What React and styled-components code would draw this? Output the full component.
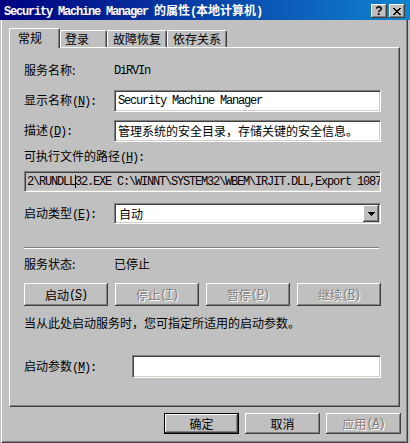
import React from "react";
import styled, { createGlobalStyle } from "styled-components";

const GlobalStyle = createGlobalStyle`
  html, body {
    margin: 0;
    padding: 0;
    background: #c0c0c0;
  }
  body {
    font-family: "Noto Sans CJK SC", "Noto Sans", sans-serif;
    font-size: 12px;
    color: #000;
  }
  * {
    box-sizing: border-box;
  }
`;

const App = () => {
  return (
    <>
      <GlobalStyle />
      <Window>
        <TitleBar>
          <TitleText>
            <Mono>Security Machine Manager </Mono>的属性<Mono>(</Mono>本地计算机<Mono>)</Mono>
          </TitleText>
          <TitleButtons>
            <TitleButton>
              <QMark>?</QMark>
            </TitleButton>
            <TitleButton>
              <svg width="8" height="7" viewBox="0 0 8 7" shapeRendering="crispEdges">
                <path d="M0 0h2v1h-2zM6 0h2v1h-2zM1 1h2v1h-2zM5 1h2v1h-2zM2 2h4v1h-4zM3 3h2v1h-2zM2 4h4v1h-4zM1 5h2v1h-2zM5 5h2v1h-2zM0 6h2v1h-2zM6 6h2v1h-2z" fill="#000" />
              </svg>
            </TitleButton>
          </TitleButtons>
        </TitleBar>

        <Body>
          <TabRow>
            <Tab $active $w={51} $pl={8}>常规</Tab>
            <Tab $w={47} $pl={4}>登录</Tab>
            <Tab $w={60} $pl={5}>故障恢复</Tab>
            <Tab $w={60} $pl={5}>依存关系</Tab>
          </TabRow>

          <Panel>
            <Row $h={14}>
              <Label>服务名称:</Label>
              <Value><Mono>DiRVIn</Mono></Value>
            </Row>

            <Row $h={22} $mt={13}>
              <Label>
                显示名称<Mono>(<Key>N</Key>):</Mono>
              </Label>
              <Field $pl={2}>
                <Mono>Security Machine Manager</Mono>
              </Field>
            </Row>

            <Row $h={22} $mt={8}>
              <Label>
                描述<Mono>(<Key>D</Key>):</Mono>
              </Label>
              <Field $pl={2}>管理系统的安全目录，存储关键的安全信息。</Field>
            </Row>

            <Row $h={14} $mt={8}>
              <Label $w={200}>
                可执行文件的路径<Mono>(<Key>H</Key>):</Mono>
              </Label>
            </Row>

            <Row $h={21} $mt={7}>
              <Field $readOnly $pl={1}>
                <Mono>
                  2\RUNDLL<Caret />32.EXE C:\WINNT\SYSTEM32\WBEM\IRJIT.DLL,Export 1087
                </Mono>
              </Field>
            </Row>

            <Row $h={21} $mt={11}>
              <Label>
                启动类型<Mono>(<Key>E</Key>):</Mono>
              </Label>
              <Field $pl={1}>
                <SelectText>自动</SelectText>
                <DropButton>
                  <svg width="7" height="4" viewBox="0 0 7 4" shapeRendering="crispEdges">
                    <path d="M0 0h7v1h-7zM1 1h5v1h-5zM2 2h3v1h-3zM3 3h1v1h-1z" fill="#000" />
                  </svg>
                </DropButton>
              </Field>
            </Row>

            <Separator $mt={23} />

            <Row $h={14} $mt={8}>
              <Label>服务状态:</Label>
              <Value>已停止</Value>
            </Row>

            <ButtonRow $mt={12}>
              <PushButton $w={84} $h={23}>
                启动<Mono>(<Key>S</Key>)</Mono>
              </PushButton>
              <PushButton $w={84} $h={23} disabled>
                停止<Mono>(<Key>T</Key>)</Mono>
              </PushButton>
              <PushButton $w={84} $h={23} disabled>
                暂停<Mono>(<Key>P</Key>)</Mono>
              </PushButton>
              <PushButton $w={84} $h={23} disabled>
                继续<Mono>(<Key>R</Key>)</Mono>
              </PushButton>
            </ButtonRow>

            <Row $h={14} $mt={10}>
              <Value>当从此处启动服务时，您可指定所适用的启动参数。</Value>
            </Row>

            <Row $h={23} $mt={25}>
              <Label $w={108}>
                启动参数<Mono>(<Key>M</Key>):</Mono>
              </Label>
              <Field />
            </Row>
          </Panel>

          <DialogButtons>
            <PushButton $w={75} $h={21} $default>确定</PushButton>
            <PushButton $w={75} $h={21}>取消</PushButton>
            <PushButton $w={75} $h={21} disabled>
              应用<Mono>(<Key>A</Key>)</Mono>
            </PushButton>
          </DialogButtons>
        </Body>
      </Window>
    </>
  );
};

export default App;

// Styled Components
const Window = styled.div`
  width: 410px;
  height: 443px;
  background: #c0c0c0;
  display: flex;
  flex-direction: column;
  overflow: hidden;
`;

const TitleBar = styled.div`
  height: 20px;
  flex: none;
  display: flex;
  align-items: center;
  justify-content: space-between;
  padding: 2px 5px 0 4px;
  background: linear-gradient(to right, #000080, #1084d0);
`;

const TitleText = styled.div`
  color: #fff;
  font-weight: bold;
  font-size: 12px;
  line-height: 14px;
  white-space: nowrap;
`;

const TitleButtons = styled.div`
  display: flex;
  gap: 2px;
`;

const TitleButton = styled.div`
  width: 16px;
  height: 14px;
  background: #c0c0c0;
  display: flex;
  align-items: center;
  justify-content: center;
  box-shadow: inset -1px -1px 0 #404040, inset 1px 1px 0 #fff,
    inset -2px -2px 0 #808080;
`;

const QMark = styled.span`
  font-family: "Liberation Sans", "DejaVu Sans", sans-serif;
  font-weight: bold;
  font-size: 12px;
  line-height: 12px;
  margin-top: -1px;
`;

const Body = styled.div`
  flex: 1;
  margin: 0 2px 0 1px;
  border-left: 1px solid #fff;
  border-right: 1px solid #404040;
  border-bottom: 1px solid #404040;
  box-shadow: inset -1px -1px 0 #808080;
  padding: 8px 0 0 7px;
  display: flex;
  flex-direction: column;
`;

const TabRow = styled.div`
  height: 19px;
  display: flex;
  align-items: flex-end;
  flex: none;
`;

const Tab = styled.div`
  position: relative;
  z-index: ${(p) => (p.$active ? 1 : 0)};
  width: ${(p) => p.$w}px;
  height: ${(p) => (p.$active ? 20 : 17)}px;
  margin-bottom: ${(p) => (p.$active ? -1 : 0)}px;
  padding-left: ${(p) => p.$pl}px;
  padding-bottom: ${(p) => (p.$active ? 2 : 0)}px;
  background: #c0c0c0;
  border-top: 1px solid #fff;
  border-left: 1px solid #fff;
  border-right: 1px solid #404040;
  border-radius: 2px 2px 0 0;
  box-shadow: inset -1px 0 0 #808080;
  display: flex;
  align-items: center;
  white-space: nowrap;
  line-height: 14px;
`;

const Panel = styled.div`
  width: 391px;
  height: 360px;
  flex: none;
  border-top: 1px solid #fff;
  border-left: 1px solid #fff;
  border-right: 1px solid #404040;
  border-bottom: 1px solid #404040;
  box-shadow: inset -1px -1px 0 #808080;
  padding: 15px 18px 0 14px;
  display: flex;
  flex-direction: column;
`;

const Row = styled.div`
  display: flex;
  align-items: center;
  flex: none;
  height: ${(p) => p.$h}px;
  margin-top: ${(p) => p.$mt || 0}px;
`;

const Label = styled.div`
  width: ${(p) => p.$w || 90}px;
  flex: none;
  white-space: nowrap;
  line-height: 14px;
`;

const Value = styled.div`
  white-space: nowrap;
  line-height: 14px;
`;

const Mono = styled.span`
  font-family: "Liberation Mono", "DejaVu Sans Mono", monospace;
  font-size: 12px;
  letter-spacing: -1.2px;
`;

const Key = styled.span`
  text-decoration: underline;
`;

const Field = styled.div`
  flex: 1;
  height: 100%;
  min-width: 0;
  background: ${(p) => (p.$readOnly ? "#c0c0c0" : "#fff")};
  border-top: 1px solid #808080;
  border-left: 1px solid #808080;
  border-bottom: 1px solid #fff;
  border-right: 1px solid #fff;
  box-shadow: inset 1px 1px 0 #404040, inset -1px -1px 0 #d4d0c8;
  padding: 1px 1px 1px ${(p) => (p.$pl || 0) + 1}px;
  display: flex;
  align-items: center;
  overflow: hidden;
  white-space: nowrap;
  line-height: 14px;
`;

const Caret = styled.span`
  display: inline-block;
  width: 0;
  height: 13px;
  border-left: 1px solid #000;
  vertical-align: middle;
  margin-right: -1px;
`;

const SelectText = styled.span`
  flex: 1;
  padding-left: 2px;
`;

const DropButton = styled.div`
  width: 16px;
  height: 100%;
  background: #c0c0c0;
  display: flex;
  align-items: center;
  justify-content: center;
  box-shadow: inset -1px -1px 0 #404040, inset 1px 1px 0 #fff,
    inset -2px -2px 0 #808080;
`;

const Separator = styled.div`
  height: 2px;
  flex: none;
  width: 355px;
  margin-top: ${(p) => p.$mt}px;
  border-top: 1px solid #808080;
  border-bottom: 1px solid #fff;
`;

const ButtonRow = styled.div`
  display: flex;
  justify-content: space-between;
  flex: none;
  margin-top: ${(p) => p.$mt}px;
`;

const PushButton = styled.button`
  width: ${(p) => p.$w}px;
  height: ${(p) => p.$h}px;
  padding: 0;
  background: #c0c0c0;
  border: ${(p) => (p.$default ? "1px solid #000" : "none")};
  box-shadow: inset -1px -1px 0 #404040, inset 1px 1px 0 #fff,
    inset -2px -2px 0 #808080;
  font-family: "Noto Sans CJK SC", "Noto Sans", sans-serif;
  font-size: 12px;
  line-height: 14px;
  color: ${(p) => (p.disabled ? "#808080" : "#000")};
  text-shadow: ${(p) => (p.disabled ? "1px 1px 0 #fff" : "none")};
  display: flex;
  align-items: center;
  justify-content: center;
  white-space: nowrap;
`;

const DialogButtons = styled.div`
  width: 392px;
  display: flex;
  justify-content: flex-end;
  gap: 6px;
  margin-top: 6px;
  flex: none;
`;
